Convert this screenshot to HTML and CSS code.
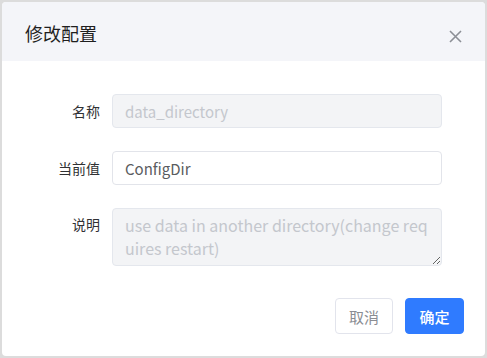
FILE: index.html
```html
<!DOCTYPE html>
<html lang="zh">
<head>
<meta charset="utf-8">
<link rel="stylesheet" href="styles.css">
</head>
<body>
<div class="dialog">
  <div class="dialog-header">
    <span class="dialog-title">修改配置</span>
    <button class="close" aria-label="close">
      <svg width="13" height="13" viewBox="0 0 13 13"><path d="M1 1L12 12M12 1L1 12" stroke="#8c8f96" stroke-width="1.6" fill="none"/></svg>
    </button>
  </div>
  <div class="dialog-body">
    <div class="row">
      <label class="label">名称</label>
      <input class="field" type="text" value="data_directory" disabled>
    </div>
    <div class="row">
      <label class="label">当前值</label>
      <input class="field active" type="text" value="ConfigDir">
    </div>
    <div class="row">
      <label class="label top">说明</label>
      <textarea class="field area" disabled>use data in another directory(change requires restart)</textarea>
    </div>
  </div>
  <div class="dialog-footer">
    <button class="btn cancel">取消</button>
    <button class="btn primary">确定</button>
  </div>
</div>
</body>
</html>
```
FILE: styles.css
```css
* { box-sizing: border-box; }
html, body { margin: 0; padding: 0; }
body {
  background: #dcdcdc;
  padding: 2px;
  width: 487px;
  height: 358px;
  font-family: "Noto Sans CJK SC", "Noto Sans", sans-serif;
}
.dialog {
  width: 483px;
  height: 354px;
  background: #fff;
  border-radius: 4px;
  overflow: hidden;
  display: flex;
  flex-direction: column;
}
.dialog-header {
  height: 59px;
  background: #f4f5f9;
  display: flex;
  align-items: center;
  justify-content: space-between;
  padding: 0 23px 0 23px;
}
.dialog-title {
  font-size: 18px;
  color: #1f1f1f;
  line-height: 24px;
  margin-top: 2px;
}
.close {
  border: none;
  background: none;
  padding: 0;
  width: 13px;
  height: 13px;
  display: flex;
  margin-top: 9px;
}
.dialog-body {
  padding: 33px 43px 0 0;
  display: flex;
  flex-direction: column;
  gap: 23px;
}
.row {
  display: flex;
  align-items: center;
}
.row:last-child { align-items: flex-start; }
.label {
  width: 110px;
  padding-right: 12px;
  text-align: right;
  font-size: 14px;
  color: #303133;
}
.label.top { padding-top: 6px; }
.field {
  width: 330px;
  height: 34px;
  border: 1px solid #e4e7ed;
  border-radius: 4px;
  padding: 1px 12px 0;
  font-family: "Noto Sans CJK SC", "Noto Sans", sans-serif;
  font-size: 15px;
  color: #606266;
  background: #fff;
  outline: none;
}
.field:disabled {
  background: #f3f4f6;
  color: #c4c7cd;
}
.field.active { border-color: #e2e4ea; color: #5a5c60; }
.area {
  height: 58px;
  padding: 5px 12px 4px;
  font-size: 16px;
  line-height: 23px;
  word-break: break-all;
  resize: vertical;
}
.dialog-footer {
  display: flex;
  justify-content: flex-end;
  gap: 12px;
  padding: 32px 21px 0 0;
}
.btn {
  width: 58px;
  height: 36px;
  border-radius: 4px;
  font-family: "Noto Sans CJK SC", "Noto Sans", sans-serif;
  font-size: 15px;
  cursor: pointer;
}
.cancel {
  background: #fff;
  border: 1px solid #e2e4ec;
  color: #8a8d93;
}
.primary {
  width: 59px;
  background: #2f7bff;
  border: 1px solid #2f7bff;
  color: #fff;
  font-weight: 500;
}
```
